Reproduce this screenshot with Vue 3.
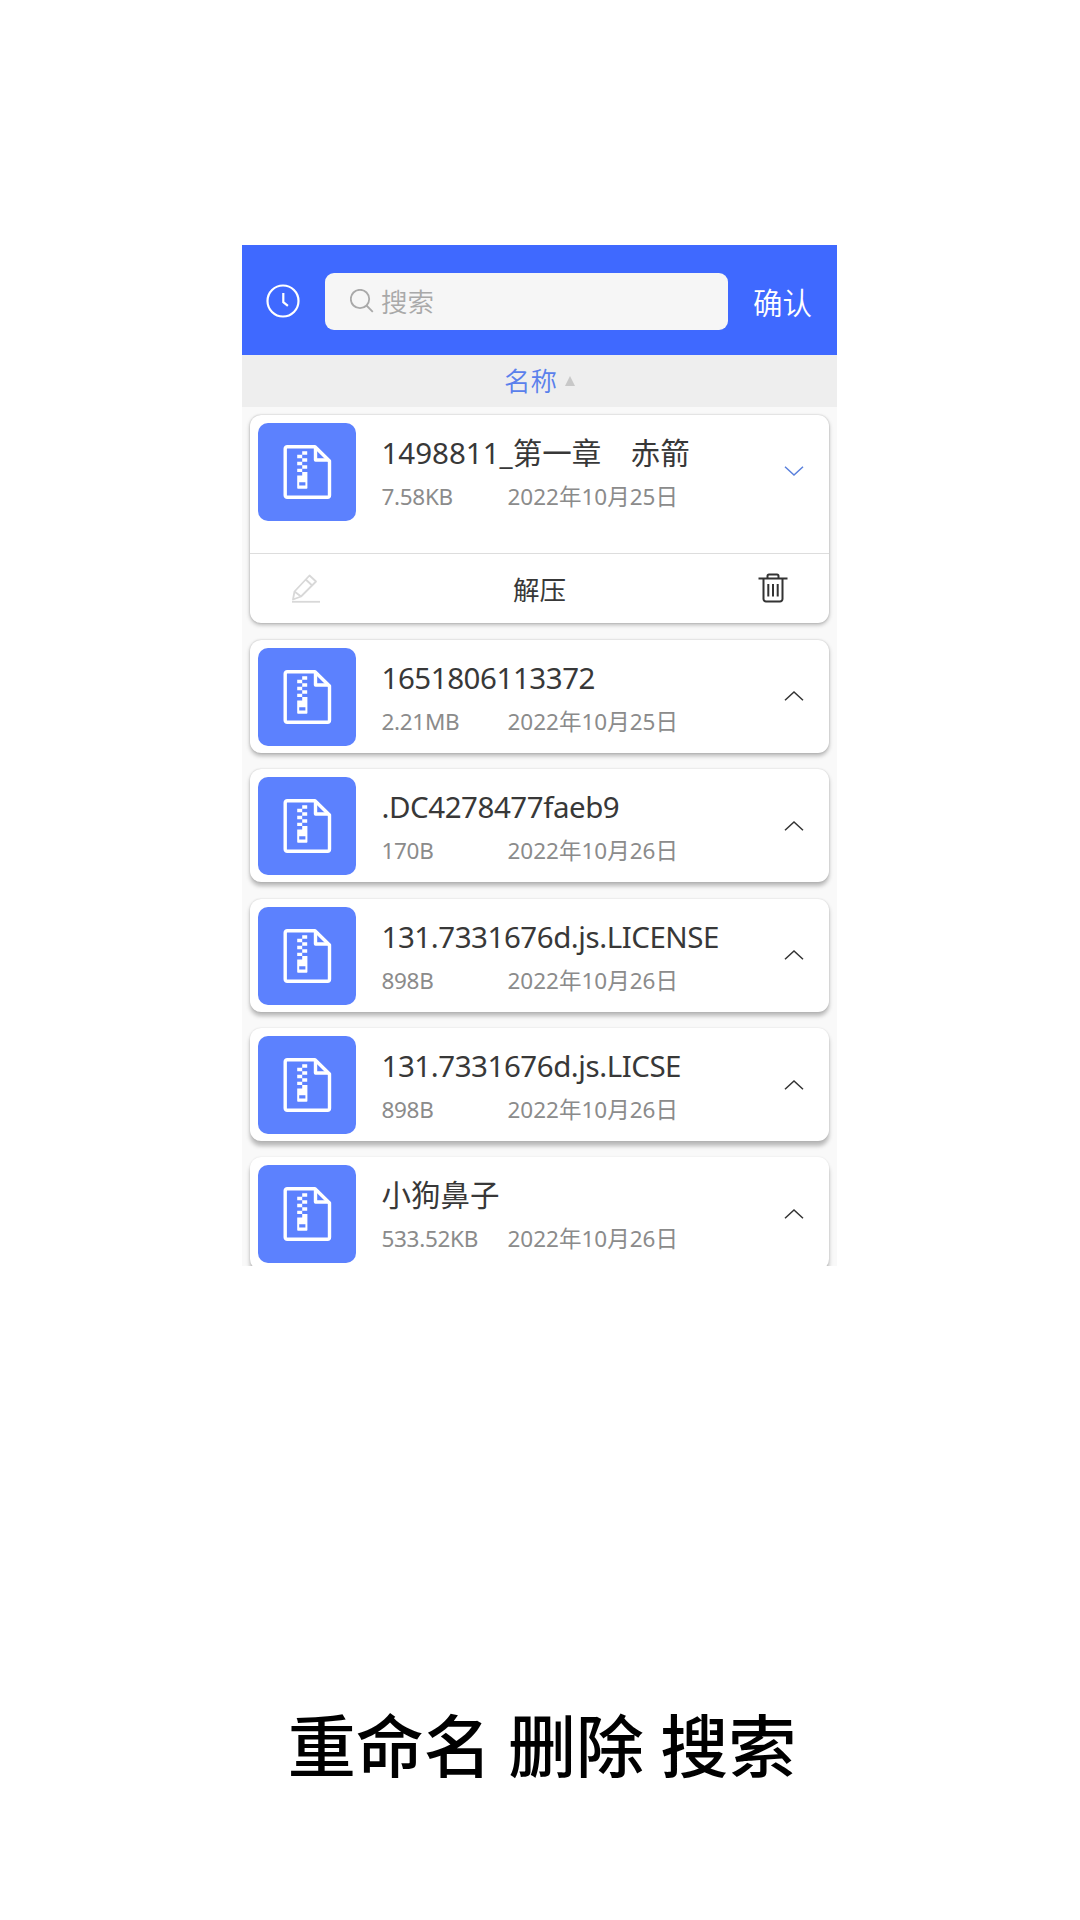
<script setup>
import { ref } from 'vue'

const keyword = ref('')
const files = ref([
  { name: '1498811_第一章　赤箭', size: '7.58KB', date: '2022年10月25日', open: true },
  { name: '1651806113372', size: '2.21MB', date: '2022年10月25日', open: false },
  { name: '.DC4278477faeb9', size: '170B', date: '2022年10月26日', open: false },
  { name: '131.7331676d.js.LICENSE', size: '898B', date: '2022年10月26日', open: false },
  { name: '131.7331676d.js.LICSE', size: '898B', date: '2022年10月26日', open: false },
  { name: '小狗鼻子', size: '533.52KB', date: '2022年10月26日', open: false }
])

// the shadow gets longer towards the bottom of the screen
function shadow(i) {
  return `0 0 2px rgba(0, 0, 0, ${0.2 - i * 0.02}), 0 ${2 + i * 0.6}px 4px rgba(0, 0, 0, 0.26)`
}

function isLatin(name) {
  return /^[\w.]+$/.test(name)
}

function toggle(file) {
  file.open = !file.open
}
</script>

<template>
  <div class="page">
    <div class="phone">
      <header class="header">
        <svg class="clock" viewBox="0 0 34 34">
          <circle cx="17" cy="17" r="15.5" />
          <path d="M17.3 9v9.2l4.6 3.6" />
        </svg>
        <label class="search">
          <svg class="magnifier" viewBox="0 0 24 24">
            <circle cx="10" cy="10" r="9.2" />
            <path d="M16.5 16.5l6.3 6.3" />
          </svg>
          <input v-model="keyword" placeholder="搜索" />
        </label>
        <span class="confirm">确认</span>
      </header>

      <div class="sort">
        <span>名称</span>
        <i class="triangle"></i>
      </div>

      <div class="list">
        <div v-for="(file, i) in files" :key="file.name" class="card" :style="{ boxShadow: shadow(i) }">
          <div class="row" :class="{ open: file.open }">
            <div class="tile">
              <svg viewBox="0 0 50 56">
                <path class="line" d="M5.200 2.700H33L47.500 17v34.300a2 2 0 0 1-2 2H5.200a2 2 0 0 1-2-2V4.700a2 2 0 0 1 2-2z" />
                <path class="line" d="M33.500 3V16h13.500" />
                <path
                  class="solid"
                  d="M20.200 7.200h5v3.500h-5zM15.200 10.700h5v3.500h-5zM20.200 14.200h5v3.500h-5zM15.200 17.700h5v3.500h-5zM20.200 21.200h5v3.500h-5zM15.200 24.700h5v3.300h-5z"
                />
                <path class="solid" fill-rule="evenodd" d="M15.200 31.500h5V28h5.200v16a.8.8 0 0 1-.8.800H16a.8.800 0 0 1-.8-.8zM17.200 38.200v3.200h6.200v-3.200z" />
              </svg>
            </div>
            <div class="info">
              <div class="name" :class="{ latin: isLatin(file.name) }">{{ file.name }}</div>
              <div class="meta">
                <span class="size">{{ file.size }}</span>
                <span>{{ file.date }}</span>
              </div>
            </div>
            <svg class="arrow" :class="{ down: file.open }" viewBox="0 0 20 12" @click="toggle(file)">
              <path d="M1 10.300L10 2l9 8.300" />
            </svg>
          </div>
          <div v-if="file.open" class="actions">
            <svg class="edit" viewBox="0 0 30 30">
              <path d="M2 26.500l1.500-8L18.500 2.500l6.500 6L10 23.500zM3.500 18.500l6.500 5M14.700 6.500l6.500 6" />
              <path d="M1 28.800h28" />
            </svg>
            <span>解压</span>
            <svg class="trash" viewBox="0 0 30 30">
              <path d="M.5 5.500h29M9.500 5v-2a1.500 1.500 0 0 1 1.500-1.500h8a1.500 1.500 0 0 1 1.500 1.500v2M5.500 5.500V26a2.500 2.500 0 0 0 2.500 2.500h14a2.500 2.500 0 0 0 2.500-2.500V5.500" />
              <path d="M10.300 11v12.500M15 11v12.500M19.700 11v12.500" />
            </svg>
          </div>
        </div>
      </div>
    </div>
    <div class="caption">重命名 删除 搜索</div>
  </div>
</template>

<style>
body {
  background: #fff;
}
</style>

<style scoped>
.page {
  box-sizing: border-box;
  width: 1080px;
  height: 1920px;
  padding-top: 245px;
  overflow: hidden;
  font-family: "Noto Sans", "Noto Sans CJK SC", sans-serif;
  background: #fff;
}

.phone {
  display: flex;
  flex-direction: column;
  width: 595px;
  height: 1021px;
  margin-left: 242px;
  overflow: hidden;
  background: #f9f9f9;
}

.header {
  display: flex;
  align-items: center;
  flex-shrink: 0;
  box-sizing: border-box;
  height: 109.6px;
  padding: 3px 24px 0;
  background: #3f69ff;
}

.clock {
  width: 34px;
  height: 34px;
  margin-bottom: 1px;
  fill: none;
  stroke: #fff;
  stroke-width: 2.2;
}

.search {
  display: flex;
  align-items: center;
  box-sizing: border-box;
  width: 403px;
  height: 57px;
  margin-left: 25px;
  padding-left: 25px;
  border-radius: 9px;
  background: #f6f6f6;
}

.magnifier {
  width: 24px;
  height: 24px;
  fill: none;
  stroke: #a9a9a9;
  stroke-width: 1.8;
}

.search input {
  flex: 1;
  min-width: 0;
  height: 40px;
  margin-left: 7px;
  padding: 1px 0 0;
  border: none;
  outline: none;
  background: none;
  font-family: inherit;
  font-size: 26.5px;
  font-weight: 350;
}

.search input::placeholder {
  color: #a9a9a9;
}

.confirm {
  margin-left: 25px;
  padding-top: 3px;
  font-size: 29.5px;
  font-weight: 350;
  line-height: 40px;
  color: #fff;
  white-space: nowrap;
}

.sort {
  display: flex;
  align-items: center;
  justify-content: center;
  flex-shrink: 0;
  height: 52.4px;
  font-size: 26.5px;
  font-weight: 350;
  line-height: 40px;
  color: #5a80ec;
  background: #eee;
}

.sort span {
  padding-top: 1px;
}

.triangle {
  margin-left: 8px;
  border: 5px solid transparent;
  border-top: none;
  border-bottom: 10px solid #c8c8c8;
}

.list {
  display: flex;
  flex-direction: column;
  gap: 16.4px;
  padding: 8px 8px 0;
}

.card {
  flex-shrink: 0;
  border-radius: 11px;
  background: #fff;
}

.row {
  display: flex;
  align-items: flex-start;
  box-sizing: border-box;
  height: 113px;
  padding: 8px 25px 0 8.4px;
}

.row.open {
  height: 138px;
}

.tile {
  display: flex;
  align-items: center;
  justify-content: center;
  width: 98px;
  height: 98px;
  border-radius: 10px;
  background: #5c81fe;
}

.tile svg {
  width: 50px;
  height: 56px;
}

.line {
  fill: none;
  stroke: #fff;
  stroke-width: 3.4;
  stroke-linejoin: round;
}

.solid {
  fill: #fff;
}

.info {
  flex: 1;
  margin-left: 25.100px;
  padding-top: 8px;
  white-space: nowrap;
}

.name {
  font-size: 29.5px;
  line-height: 44px;
  color: #383838;
}

.name.latin {
  letter-spacing: -0.45px;
}

.meta {
  display: flex;
  font-size: 22.5px;
  line-height: 32px;
  margin-top: 6px;
  color: #8b8b8b;
}

.size {
  width: 126px;
  letter-spacing: -0.3px;
}

.arrow {
  width: 20px;
  height: 12px;
  margin-top: 42.5px;
  fill: none;
  stroke: #333;
  stroke-width: 1.5;
}

.arrow.down {
  transform: rotate(180deg);
  stroke: #5a80dc;
}

.actions {
  display: flex;
  align-items: center;
  justify-content: space-between;
  box-sizing: border-box;
  height: 70.500px;
  padding: 0 41px 1px 41px;
  border-top: 1px solid #ddd;
  font-size: 26.5px;
  line-height: 40px;
  color: #383838;
}

.actions span {
  padding-top: 3px;
}

.edit,
.trash {
  width: 30px;
  height: 30px;
  fill: none;
  stroke: #d8d8d8;
  stroke-width: 1.8;
  stroke-linejoin: round;
}

.trash {
  stroke: #333;
  stroke-width: 2;
}

.caption {
  margin-top: 428px;
  padding-left: 4px;
  text-align: center;
  font-family: "Noto Sans CJK SC", sans-serif;
  font-size: 68px;
  font-weight: 500;
  line-height: 98px;
  word-spacing: 1px;
  color: #000;
}
</style>
